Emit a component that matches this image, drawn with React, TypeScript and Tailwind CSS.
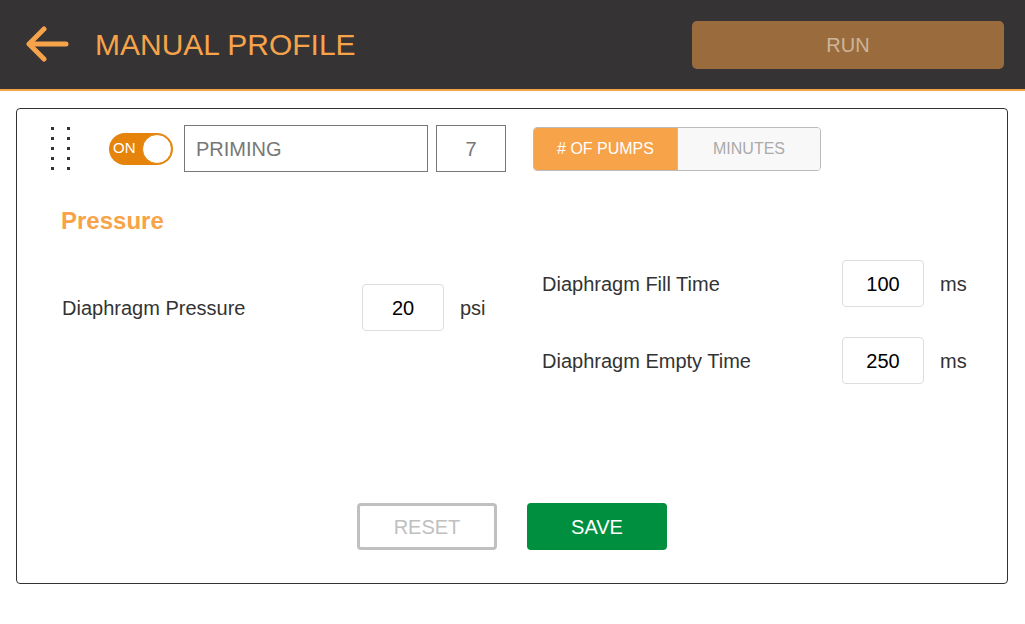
import { useState } from 'react'

const ORANGE = '#f7a34a'

function BackArrow() {
  return (
    <svg width="44" height="40" viewBox="0 0 44 40" fill="none" stroke={ORANGE} strokeWidth="5" strokeLinecap="round" strokeLinejoin="round">
      <line x1="4" y1="19" x2="40" y2="19" />
      <polyline points="18,4 3,19 18,34" />
    </svg>
  )
}

function DragHandle() {
  return (
    <div className="grid grid-cols-2 gap-x-[13px] gap-y-[7px] w-[19px]">
      {Array.from({ length: 10 }).map((_, i) => (
        <div key={i} className="w-[3px] h-[3px] bg-[#333]" />
      ))}
    </div>
  )
}

type FieldProps = {
  label: string
  value: string
  unit: string
}

function Field({ label, value, unit }: FieldProps) {
  return (
    <div className="flex items-center">
      <div className="w-[300px] text-[20px] text-[#333]">{label}</div>
      <div className="w-[82px] h-[47px] border border-[#ddd] rounded-[4px] flex items-center justify-center text-[20px] text-black">
        {value}
      </div>
      <div className="ml-4 text-[20px] text-[#333]">{unit}</div>
    </div>
  )
}

export default function App() {
  const [mode, setMode] = useState<'pumps' | 'minutes'>('pumps')

  return (
    <div className="w-[1025px] h-[624px] bg-white" style={{ fontFamily: '"Liberation Sans", Arial, sans-serif' }}>
      {/* Header */}
      <div className="h-[91px] bg-[#353334] border-b-2 border-[#f7a34a] flex items-center pl-[26px] pr-[21px]">
        <BackArrow />
        <div className="ml-[25px] text-[30px] text-[#f7a34a] leading-none">MANUAL PROFILE</div>
        <button
          type="button"
          className="ml-auto w-[312px] h-[48px] rounded-[5px] bg-[#9a6b3c] text-[#cdb59a] text-[20px]"
        >
          RUN
        </button>
      </div>

      {/* Card */}
      <div className="mt-[17px] ml-4 w-[992px] h-[476px] border border-[#333] rounded-[4px] flex flex-col">
        <div className="flex items-center pt-4 pl-[34px]">
          <DragHandle />
          <div className="ml-[39px] w-[64px] h-[32px] rounded-full bg-[#e5830a] flex items-center justify-between pl-[4px] pr-[1px]">
            <span className="text-white text-[15px]">ON</span>
            <span className="w-[30px] h-[30px] rounded-full bg-white border border-[#e5830a]" />
          </div>
          <div className="ml-[11px] w-[244px] h-[47px] border border-[#777] flex items-center pl-[11px] text-[20px] text-[#777]">
            PRIMING
          </div>
          <div className="ml-[8px] w-[70px] h-[47px] border border-[#777] flex items-center justify-center text-[20px] text-[#777]">
            7
          </div>
          <div className="ml-[27px] w-[288px] h-[44px] border border-[#bbb] rounded-[4px] flex overflow-hidden text-[16px]">
            <button
              type="button"
              onClick={() => setMode('pumps')}
              className={
                mode === 'pumps'
                  ? 'w-[144px] bg-[#f7a34a] text-white border-r border-[#bbb]'
                  : 'w-[144px] bg-[#f8f8f8] text-[#aaa] border-r border-[#bbb]'
              }
            >
              # OF PUMPS
            </button>
            <button
              type="button"
              onClick={() => setMode('minutes')}
              className={mode === 'minutes' ? 'flex-1 bg-[#f7a34a] text-white' : 'flex-1 bg-[#f8f8f8] text-[#aaa]'}
            >
              MINUTES
            </button>
          </div>
        </div>

        <div className="mt-[35px] pl-[44px] text-[24px] font-bold text-[#f7a34a] leading-[28px]">Pressure</div>

        <div className="mt-[25px] flex pl-[45px]">
          <div className="w-[480px] pt-[24px]">
            <Field label="Diaphragm Pressure" value="20" unit="psi" />
          </div>
          <div className="flex flex-col gap-[30px]">
            <Field label="Diaphragm Fill Time" value="100" unit="ms" />
            <Field label="Diaphragm Empty Time" value="250" unit="ms" />
          </div>
        </div>

        <div className="mt-auto pb-[33px] flex justify-center gap-[30px]">
          <button
            type="button"
            className="w-[140px] h-[47px] border-[3px] border-[#c0c0c0] rounded-[4px] text-[20px] text-[#c0c0c0]"
          >
            RESET
          </button>
          <button type="button" className="w-[140px] h-[47px] rounded-[4px] bg-[#008f3f] text-[20px] text-white">
            SAVE
          </button>
        </div>
      </div>
    </div>
  )
}
